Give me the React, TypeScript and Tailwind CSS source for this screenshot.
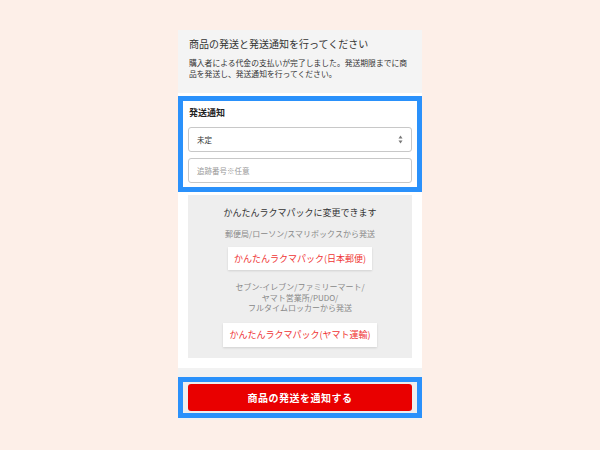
import React from "react";

const font = { fontFamily: '"Noto Sans CJK JP", "Noto Sans", sans-serif' };

export default function App() {
  return (
    <div className="w-[600px] h-[450px] bg-[#fdefe8] overflow-hidden" style={font}>
      <div className="w-[244px] mx-auto mt-[30px] bg-white flex flex-col">
        {/* header */}
        <div className="bg-[#f4f4f4] h-[63px] pl-[11px] pr-[8px] pt-[6px]">
          <div className="text-[10px] leading-[16px] text-[#333] whitespace-nowrap">
            商品の発送と発送通知を行ってください
          </div>
          <div className="mt-[5px] text-[7.8px] leading-[11px] text-[#333] whitespace-nowrap">
            購入者による代金の支払いが完了しました。発送期限までに商
            <br />
            品を発送し、発送通知を行ってください。
          </div>
        </div>
        <div className="h-[3px]" />
        {/* shipping notice section */}
        <div className="border-[5px] border-[#2a91fb] px-[5px] pt-[4px] pb-[4px] bg-white">
          <div className="text-[9px] leading-[16px] font-bold text-[#222] pl-[1px]">発送通知</div>
          <div className="mt-[6px] h-[25px] rounded-[3px] border border-[#c8c8c8] flex items-center justify-between pl-[8px] pr-[8px]">
            <span className="text-[7.5px] text-[#333]">未定</span>
            <svg width="5" height="9" viewBox="0 0 5 9">
              <path d="M2.5 0.5 L4.5 3.5 L0.5 3.5 Z" fill="#777" />
              <path d="M2.5 8.5 L4.5 5.5 L0.5 5.5 Z" fill="#777" />
            </svg>
          </div>
          <div className="mt-[6px] h-[25px] rounded-[3px] border border-[#c8c8c8] flex items-center pl-[8px]">
            <span className="text-[7.5px] text-[#999]">追跡番号※任意</span>
          </div>
        </div>
        <div className="h-[3px]" />
        {/* rakuma pack box */}
        <div className="mx-[10px] bg-[#eeeeee] h-[163px] flex flex-col items-center pt-[11px]">
          <div className="text-[9px] leading-[13px] text-[#333] whitespace-nowrap">
            かんたんラクマパックに変更できます
          </div>
          <div className="mt-[9px] text-[8px] leading-[11px] text-[#888] whitespace-nowrap">
            郵便局/ローソン/スマリボックスから発送
          </div>
          <div className="mt-[8px] w-[144px] h-[23px] bg-white shadow-[0_1px_2px_rgba(0,0,0,0.12)] flex items-center justify-center text-[9px] text-[#ef3535] whitespace-nowrap">
            かんたんラクマパック(日本郵便)
          </div>
          <div className="mt-[12px] text-[8px] leading-[10.5px] text-[#888] text-center whitespace-nowrap">
            セブン-イレブン/ファミリーマート/
            <br />
            ヤマト営業所/PUDO/
            <br />
            フルタイムロッカーから発送
          </div>
          <div className="mt-[9px] w-[154px] h-[24px] bg-white shadow-[0_1px_2px_rgba(0,0,0,0.12)] flex items-center justify-center text-[9px] text-[#ef3535] whitespace-nowrap">
            かんたんラクマパック(ヤマト運輸)
          </div>
        </div>
        <div className="h-[10px]" />
        {/* footer */}
        <div className="bg-[#f2f2f2] pt-[9px] pb-[2px]">
          <div className="border-[5px] border-[#2a91fb] px-[5px] py-[2px] bg-[#eeeeee]">
            <div className="h-[27px] rounded-[3px] bg-[#e90000] flex items-center justify-center text-white text-[10px] font-bold tracking-[0.5px]">
              商品の発送を通知する
            </div>
          </div>
        </div>
      </div>
    </div>
  );
}
